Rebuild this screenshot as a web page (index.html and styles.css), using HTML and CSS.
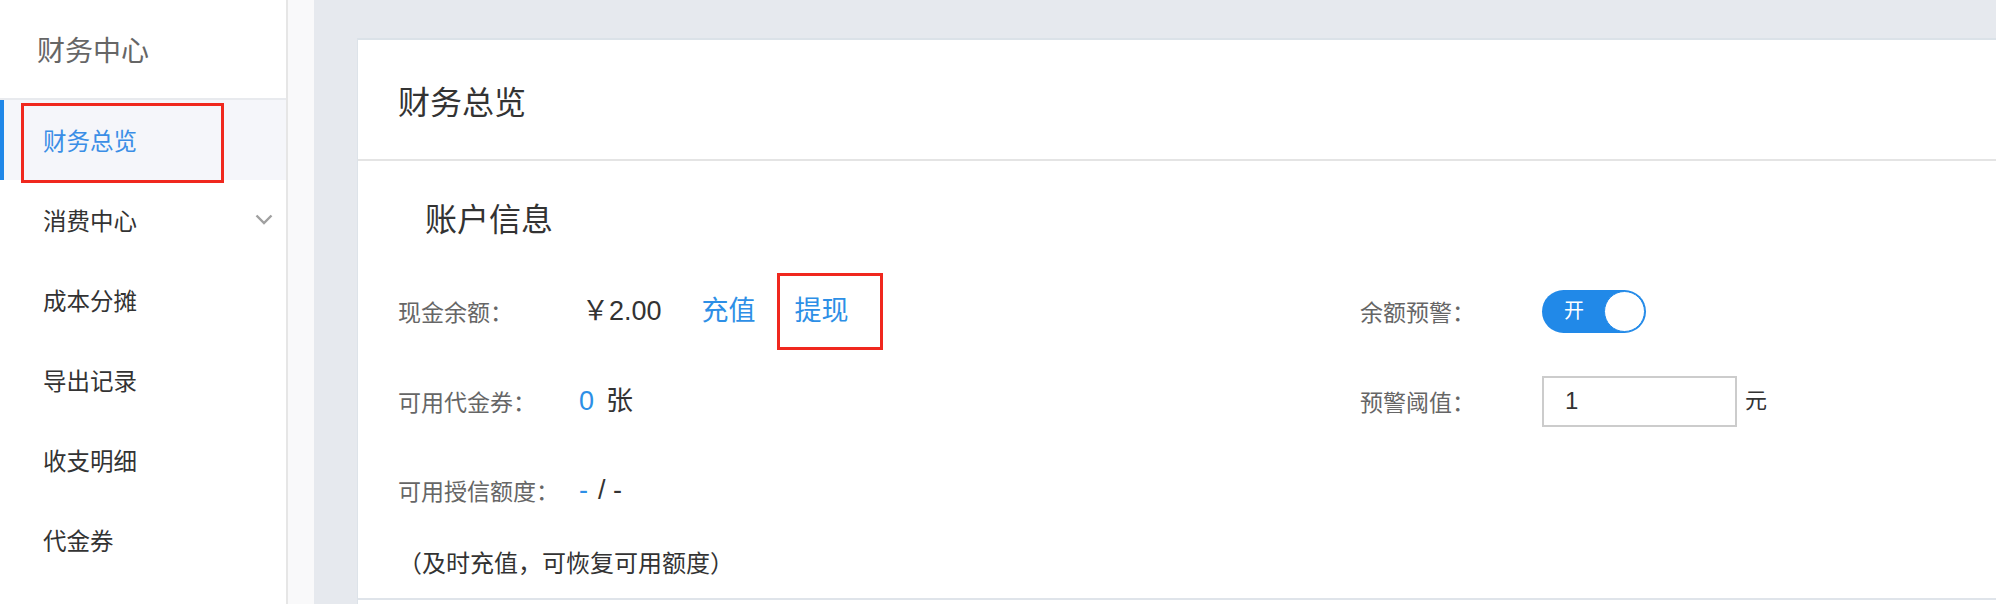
FILE: index.html
```html
<!DOCTYPE html>
<html lang="zh-CN">
<head>
    <meta charset="UTF-8">
    <meta name="viewport" content="width=device-width, initial-scale=1.0">
    <title>财务总览</title>
    <link rel="stylesheet" href="styles.css">
</head>
<body>
<div class="layout">
    <aside class="sidebar">
        <div class="sidebar-title">财务中心</div>
        <ul class="menu">
            <li class="menu-item active marked">财务总览</li>
            <li class="menu-item">
                <span>消费中心</span>
                <svg class="chevron" width="18" height="11" viewBox="0 0 18 11">
                    <polyline points="1.5,1.5 9,9 16.5,1.5" fill="none" stroke="#a0a0a0" stroke-width="2.4"/>
                </svg>
            </li>
            <li class="menu-item">成本分摊</li>
            <li class="menu-item">导出记录</li>
            <li class="menu-item">收支明细</li>
            <li class="menu-item">代金券</li>
        </ul>
    </aside>
    <div class="gutter"></div>
    <main class="main">
        <section class="card">
            <header class="card-header">财务总览</header>
            <div class="card-body">
                <h3 class="section-title">账户信息</h3>
                <div class="info-grid">
                    <div class="label">现金余额：</div>
                    <div class="value">
                        <span class="amount">￥2.00</span>
                        <a class="link">充值</a>
                        <a class="link marked-link">提现</a>
                    </div>
                    <div class="label">余额预警：</div>
                    <div class="value">
                        <div class="switch">
                            <span class="switch-text">开</span>
                            <span class="switch-knob"></span>
                        </div>
                    </div>

                    <div class="label">可用代金券：</div>
                    <div class="value"><span class="num-blue">0</span><span class="unit">张</span></div>
                    <div class="label">预警阈值：</div>
                    <div class="value">
                        <input class="threshold" type="text" value="1">
                        <span class="yuan">元</span>
                    </div>

                    <div class="label">可用授信额度：</div>
                    <div class="value"><span class="num-blue">-</span><span class="slash">/ -</span></div>
                </div>
                <p class="note">（及时充值，可恢复可用额度）</p>
            </div>
        </section>
    </main>
</div>
</body>
</html>
```

FILE: styles.css
```css
* {
    box-sizing: border-box;
}

body {
    margin: 0;
    height: 604px;
    overflow: hidden;
    background-color: #e6e9ee;
    font-family: 'Liberation Sans', 'Noto Sans CJK SC', sans-serif;
    color: #333333;
}

.layout {
    display: flex;
    height: 604px;
}

/* sidebar */
.sidebar {
    width: 288px;
    flex-shrink: 0;
    background-color: #ffffff;
    border-right: 2px solid #e6e6e6;
}

.sidebar-title {
    height: 100px;
    padding-left: 37px;
    display: flex;
    align-items: center;
    font-size: 28px;
    color: #666666;
    border-bottom: 2px solid #e8eaee;
}

.menu {
    list-style: none;
    margin: 0;
    padding: 0;
}

.menu-item {
    position: relative;
    height: 80px;
    padding-left: 43px;
    padding-right: 13px;
    display: flex;
    align-items: center;
    justify-content: space-between;
    font-size: 23.5px;
    color: #333333;
}

.menu-item.active {
    background-color: #f5f6fa;
    color: #3a8ee6;
    border-left: 4px solid #1f87e8;
    padding-left: 39px;
}

.menu-item.marked::after {
    content: "";
    position: absolute;
    left: 17px;
    top: 3px;
    width: 197px;
    height: 74px;
    border: 3px solid #f0281e;
}

.chevron {
    margin-top: -2px;
}

.gutter {
    width: 26px;
    flex-shrink: 0;
    background-color: #f9f9fa;
}

/* main */
.main {
    flex: 1;
    padding-top: 38px;
    padding-left: 43px;
    overflow: hidden;
}

.card {
    background-color: #ffffff;
    border-top: 2px solid #dbe2e8;
    border-left: 1px solid #dde3e9;
    height: 580px;
}

.card-header {
    height: 121px;
    padding-left: 40px;
    display: flex;
    align-items: center;
    font-size: 32px;
    color: #333333;
    border-bottom: 2px solid #e4e4e4;
}

.card-body {
    padding-left: 40px;
    border-bottom: 2px solid #dfe4ea;
}

.section-title {
    margin: 0;
    height: 105px;
    padding-top: 39px;
    padding-left: 27px;
    font-size: 32px;
    font-weight: normal;
    line-height: 40px;
    color: #333333;
}

.info-grid {
    display: grid;
    grid-template-columns: 181px 781px 182px auto;
    grid-template-rows: 90px 90px 88px;
    align-items: center;
}

.label {
    font-size: 23px;
    color: #666666;
}

.value {
    display: flex;
    align-items: center;
    font-size: 27px;
    line-height: 40px;
}

.amount {
    color: #333333;
    margin-left: 3px;
}

.link {
    color: #2d8fe6;
    cursor: pointer;
}

.amount + .link {
    margin-left: 40px;
}

.link + .link {
    margin-left: 39px;
}

.marked-link {
    position: relative;
}

.marked-link::after {
    content: "";
    position: absolute;
    left: -18px;
    right: -34px;
    top: -18px;
    bottom: -19px;
    border: 3px solid #f0281e;
}

.num-blue {
    color: #2d8fe6;
}

.unit {
    margin-left: 12px;
}

.slash {
    margin-left: 10px;
}

.switch {
    position: relative;
    width: 104px;
    height: 43px;
    border-radius: 22px;
    background-color: #2189e8;
    display: flex;
    align-items: center;
    justify-content: space-between;
    padding: 0 1px 0 22px;
}

.switch-text {
    font-size: 20px;
    color: #ffffff;
}

.switch-knob {
    width: 41px;
    height: 41px;
    border-radius: 50%;
    background-color: #ffffff;
    border: 1px solid #2189e8;
}

.threshold {
    width: 195px;
    height: 51px;
    border: 2px solid #cccccc;
    padding-left: 21px;
    font-family: 'Liberation Sans', sans-serif;
    font-size: 24px;
    color: #333333;
    outline: none;
}

.yuan {
    margin-left: 8px;
    font-size: 22px;
    color: #333333;
}

.note {
    margin: 0;
    height: 64px;
    padding-top: 10px;
    line-height: 40px;
    font-size: 24px;
    color: #333333;
}
```
